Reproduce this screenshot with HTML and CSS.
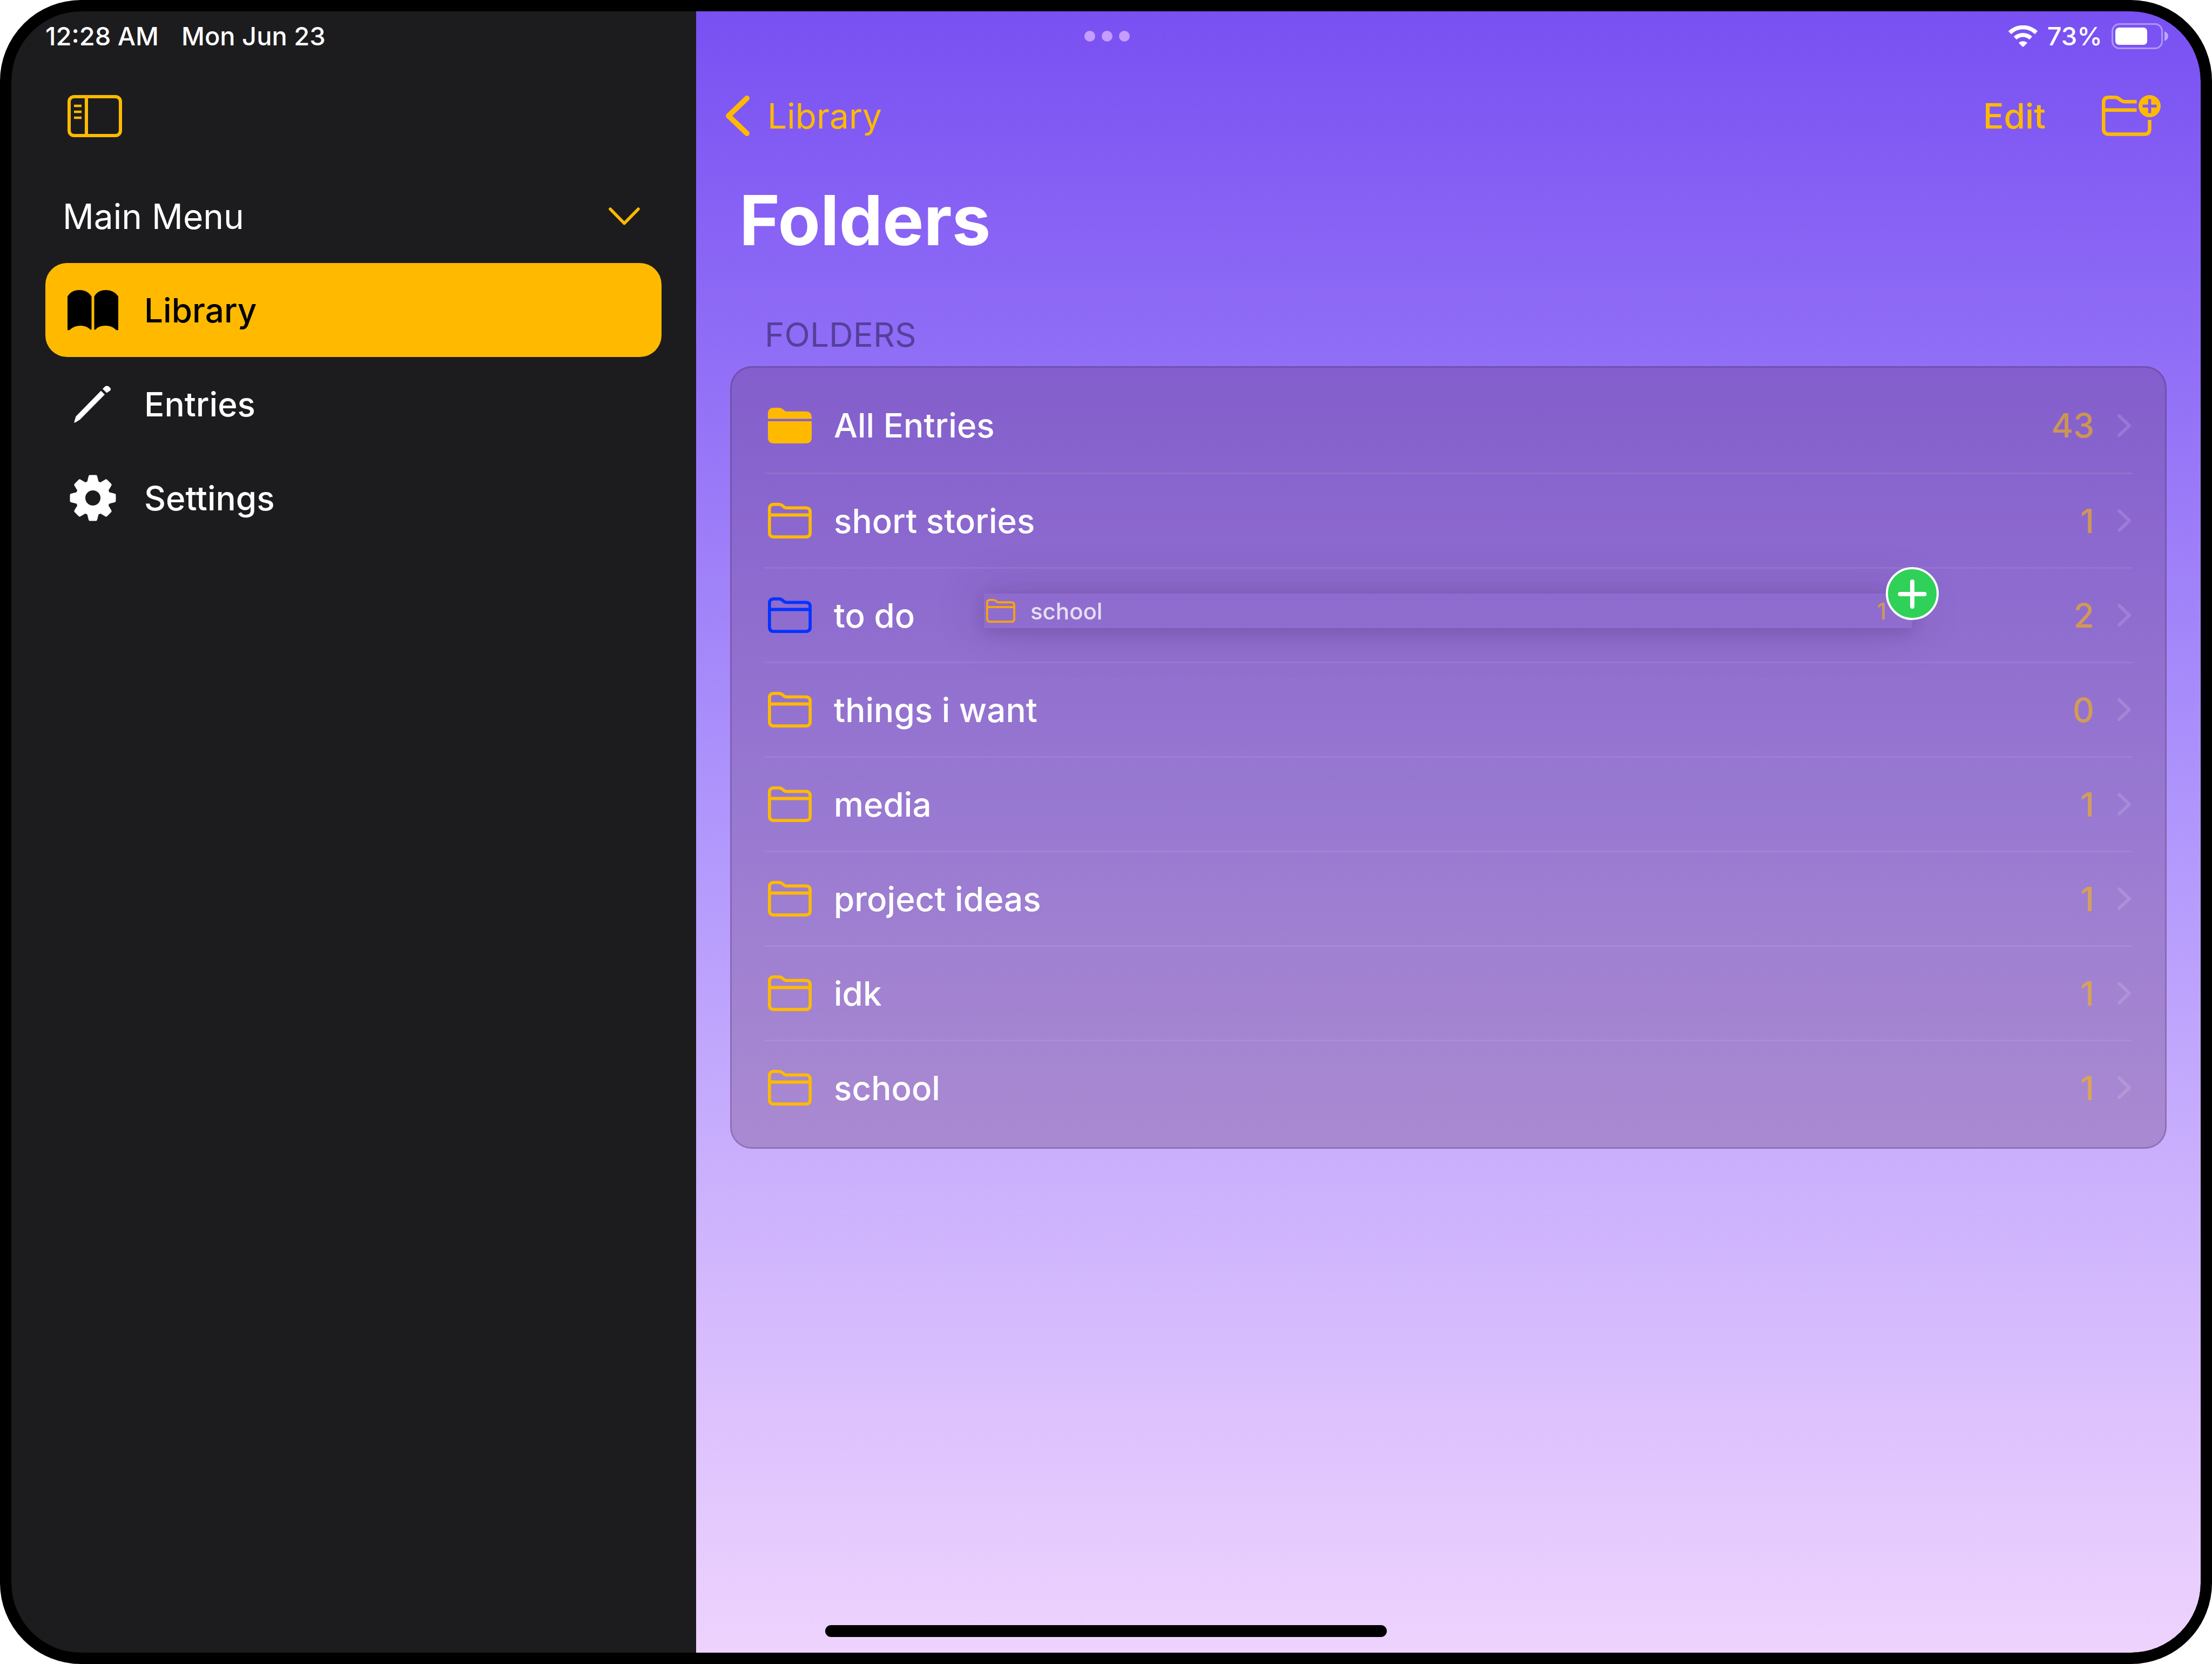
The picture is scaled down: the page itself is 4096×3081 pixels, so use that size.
FILE: index.html
```html
<!DOCTYPE html>
<html lang="en">
<head>
<meta charset="utf-8">
<title>Folders</title>
<link rel="stylesheet" href="styles.css">
</head>
<body>
<svg class="defs" aria-hidden="true">
  <symbol id="folder" viewBox="0 0 81 66">
    <path d="M2.8 11Q2.8 2.8 11 2.8H20Q24 2.8 27 5.400L30 8Q31.500 9.300 34 9.300H70Q78.200 9.300 78.200 17.500V55Q78.200 63.200 70 63.200H11Q2.800 63.200 2.800 55ZM2.800 22.500H78.200" fill="none" stroke="currentColor" stroke-width="5.800"/>
  </symbol>
  <symbol id="folder-fill" viewBox="0 0 81 66">
    <path d="M0 20.500V11Q0 0 11 0H21Q25 0 28 3L31 5.500Q32.500 6.800 35 6.800H70Q81 6.800 81 17.500V20.500ZM0 25H81V55Q81 66 70 66H11Q0 66 0 55Z" fill="currentColor"/>
  </symbol>
  <symbol id="disclosure" viewBox="0 0 25 42">
    <path d="M3 3L22 21L3 39" fill="none" stroke="currentColor" stroke-width="6" stroke-linecap="round" stroke-linejoin="round"/>
  </symbol>
</svg>

<div class="screen">
  <header class="status">
    <div class="status-left"><time>12:28 AM</time><span>Mon Jun 23</span></div>
    <div class="dots"><i></i><i></i><i></i></div>
    <div class="status-right">
      <svg class="wifi" viewBox="0 0 56 40" aria-label="Wi-Fi">
        <path d="M3.500 13.500A35 35 0 0 1 52.500 13.500" fill="none" stroke="currentColor" stroke-width="7.500"/>
        <path d="M13.500 23.500A21 21 0 0 1 42.500 23.500" fill="none" stroke="currentColor" stroke-width="7.500"/>
        <path d="M20 32.500A11.500 11.500 0 0 1 36 32.500L29.500 39Q28 40.500 26.500 39Z" fill="currentColor"/>
      </svg>
      <span>73%</span>
      <svg class="battery" viewBox="0 0 106 48" aria-label="Battery">
        <rect x="1.500" y="1.500" width="92" height="45" rx="13" fill="none" stroke="#fff" stroke-opacity=".4" stroke-width="3"/>
        <rect x="7" y="8" width="59" height="32" rx="7" fill="#fff"/>
        <path d="M98 15Q105 18 105 24T98 33Z" fill="#fff" fill-opacity=".5"/>
      </svg>
    </div>
  </header>

  <aside class="sidebar">
    <div class="side-bar">
      <button class="plain" type="button" aria-label="Toggle sidebar">
        <svg class="toggle" viewBox="0 0 101 78">
          <rect x="3" y="3" width="95" height="72" rx="9" fill="none" stroke="currentColor" stroke-width="6"/>
          <path d="M35 3V75" stroke="currentColor" stroke-width="6"/>
          <path d="M12 20H26M12 31H26M12 42H26" stroke="currentColor" stroke-width="4.500"/>
        </svg>
      </button>
    </div>
    <button class="menu-head" type="button">
      <span>Main Menu</span>
      <svg class="chev-down" viewBox="0 0 58 33" aria-hidden="true"><path d="M3 3L29 29.500L55 3" fill="none" stroke="currentColor" stroke-width="5.500" stroke-linecap="round" stroke-linejoin="round"/></svg>
    </button>
    <nav class="menu">
      <a class="item active" href="#library">
        <svg viewBox="0 0 94 86" aria-hidden="true"><path d="M0 18Q7 6 22 6T44.500 18V78.500Q44 80.500 42 79Q35 72 24 72T5 79Q1 82 0 79ZM49.500 18Q56 6 71 6T94 18V79Q93 82 89 79Q82 72 70 72T52 79Q50 80.500 49.500 78.500Z" fill="currentColor"/></svg>
        <span>Library</span>
      </a>
      <a class="item" href="#entries">
        <svg viewBox="0 0 94 86" aria-hidden="true"><path d="M12.500 76L15.500 66L62 18.500L69 25.500L23 72L14 77.500Q12 78 12.500 76ZM65 15L69.500 10.500Q74 8 78 12T78.500 18.500L72.500 22.500Z" fill="currentColor"/></svg>
        <span>Entries</span>
      </a>
      <a class="item" href="#settings">
        <svg viewBox="0 0 94 86" aria-hidden="true">
          <g transform="translate(47 43)">
            <circle r="23" fill="none" stroke="currentColor" stroke-width="18"/>
            <g fill="currentColor" stroke="currentColor" stroke-width="5" stroke-linejoin="round">
              <path id="tooth" d="M-8.500 -28L-5.500 -40H5.500L8.500 -28Z"/>
              <use href="#tooth" transform="rotate(45)"/><use href="#tooth" transform="rotate(90)"/><use href="#tooth" transform="rotate(135)"/><use href="#tooth" transform="rotate(180)"/><use href="#tooth" transform="rotate(225)"/><use href="#tooth" transform="rotate(270)"/><use href="#tooth" transform="rotate(315)"/>
            </g>
          </g>
        </svg>
        <span>Settings</span>
      </a>
    </nav>
  </aside>

  <main class="content">
    <div class="toolbar">
      <a class="back" href="#library">
        <svg viewBox="0 0 45 75" aria-hidden="true"><path d="M40 5L6 37.500L40 70" fill="none" stroke="currentColor" stroke-width="10" stroke-linecap="round" stroke-linejoin="round"/></svg>
        <span>Library</span>
      </a>
      <div class="actions">
        <button class="plain edit" type="button">Edit</button>
        <button class="plain" type="button" aria-label="New folder">
          <svg class="new-folder" viewBox="0 0 109 76">
            <path d="M64.500 12.300H43Q39 12.300 36 10L30.500 6Q28 4.300 24 4.300H13Q3.200 4.300 3.200 14V62.500Q3.200 72.500 13 72.500H79Q88.500 72.500 88.500 62.500V46M3.200 27.700H64.500" fill="none" stroke="currentColor" stroke-width="6.500"/>
            <path fill-rule="evenodd" d="M88.500 0A20.500 20.500 0 0 1 88.500 41A20.500 20.500 0 0 1 88.500 0ZM85.700 7.500V17.700H75.500V23.300H85.700V33.500H91.300V23.300H101.500V17.700H91.300V7.500Z" fill="currentColor"/>
          </svg>
        </button>
      </div>
    </div>
    <h1>Folders</h1>
    <section class="section">
      <h2>FOLDERS</h2>
      <div class="card">
        <ul class="rows">
          <li><a href="#all"><svg class="folder"><use href="#folder-fill"/></svg><span class="name">All Entries</span><span class="count">43</span><svg class="disclosure"><use href="#disclosure"/></svg></a></li>
          <li><a href="#short"><svg class="folder"><use href="#folder"/></svg><span class="name">short stories</span><span class="count">1</span><svg class="disclosure"><use href="#disclosure"/></svg></a></li>
          <li><a href="#todo"><svg class="folder blue"><use href="#folder"/></svg><span class="name">to do</span><span class="count">2</span><svg class="disclosure"><use href="#disclosure"/></svg></a></li>
          <li><a href="#want"><svg class="folder"><use href="#folder"/></svg><span class="name">things i want</span><span class="count">0</span><svg class="disclosure"><use href="#disclosure"/></svg></a></li>
          <li><a href="#media"><svg class="folder"><use href="#folder"/></svg><span class="name">media</span><span class="count">1</span><svg class="disclosure"><use href="#disclosure"/></svg></a></li>
          <li><a href="#ideas"><svg class="folder"><use href="#folder"/></svg><span class="name">project ideas</span><span class="count">1</span><svg class="disclosure"><use href="#disclosure"/></svg></a></li>
          <li><a href="#idk"><svg class="folder"><use href="#folder"/></svg><span class="name">idk</span><span class="count">1</span><svg class="disclosure"><use href="#disclosure"/></svg></a></li>
          <li><a href="#school"><svg class="folder"><use href="#folder"/></svg><span class="name">school</span><span class="count">1</span><svg class="disclosure"><use href="#disclosure"/></svg></a></li>
        </ul>
        <div class="drag">
          <svg class="drag-folder"><use href="#folder"/></svg>
          <span class="drag-name">school</span>
          <span class="count">1</span>
          <svg class="badge" viewBox="0 0 98 98" aria-label="Add">
            <circle cx="49" cy="49" r="47" fill="#30d158" stroke="#fff" stroke-width="4"/>
            <path d="M49 27V73M26.500 50H71.500" stroke="#fff" stroke-width="8" stroke-linecap="round"/>
          </svg>
        </div>
      </div>
    </section>
  </main>
  <div class="home"></div>
</div>
</body>
</html>
```
FILE: styles.css
```css
:root {
  --accent: #ffba00;
}

* {
  box-sizing: border-box;
}

body {
  margin: 0;
  background: #fff;
  font-family: Inter, "Liberation Sans", sans-serif;
  color: #fff;
}

.defs {
  position: absolute;
  width: 0;
  height: 0;
}

svg {
  display: block;
  flex: none;
}

a {
  color: inherit;
  text-decoration: none;
}

button {
  margin: 0;
  border: 0;
  background: none;
  font: inherit;
  color: inherit;
}

.plain {
  padding: 0;
  color: var(--accent);
}

.screen {
  position: relative;
  display: grid;
  grid-template-columns: 1268px 1fr;
  min-height: 100vh;
  border: 21px solid #000;
  border-radius: 150px;
  background: #000;
  overflow: hidden;
}

/* Status bar */
.status {
  position: absolute;
  top: 0;
  left: 0;
  right: 0;
  display: grid;
  grid-template-columns: 1fr auto 1fr;
  align-items: center;
  height: 91px;
  padding: 0 59px 0 63px;
  font-size: 47px;
  font-weight: 500;
  line-height: 56px;
}

.status-left {
  display: flex;
  gap: 42px;
}

.dots {
  display: flex;
  gap: 12px;
}

.dots i {
  width: 20px;
  height: 20px;
  border-radius: 50%;
  background: #c49dff;
}

.status-right {
  display: flex;
  align-items: center;
  justify-content: flex-end;
  gap: 17px;
}

.wifi {
  width: 56px;
  height: 40px;
}

.battery {
  width: 106px;
  height: 48px;
}

/* Sidebar */
.sidebar {
  padding: 91px 64px 0 63px;
  background: #1c1c1e;
  border-radius: 129px 0 0 129px;
}

.side-bar {
  display: flex;
  align-items: center;
  height: 206px;
  padding-left: 41px;
}

.toggle {
  width: 101px;
  height: 78px;
}

.menu-head {
  display: flex;
  align-items: center;
  justify-content: space-between;
  width: 100%;
  height: 164px;
  margin-bottom: 5px;
  padding: 0 40px 0 32px;
  font-size: 64px;
}

.chev-down {
  width: 58px;
  height: 33px;
  color: var(--accent);
}

.item {
  display: flex;
  align-items: center;
  gap: 48px;
  height: 174px;
  padding-left: 41px;
  border-radius: 40px;
  font-size: 62px;
  font-weight: 500;
}

.item svg {
  width: 94px;
  height: 86px;
}

.item.active {
  background: var(--accent);
  color: #000;
}

/* Content */
.content {
  padding: 91px 63px 0;
  background: linear-gradient(#7950f2, #b197fc 50%, #eed3fe);
  border-radius: 0 129px 129px 0;
}

.toolbar {
  display: flex;
  align-items: center;
  justify-content: space-between;
  height: 204px;
  margin: 0 11px 0 -9px;
  color: var(--accent);
}

.back {
  display: flex;
  align-items: center;
  gap: 33px;
  font-size: 64px;
}

.back svg {
  width: 45px;
  height: 75px;
}

.actions {
  display: flex;
  align-items: center;
  gap: 104px;
}

.edit {
  font-size: 64px;
  font-weight: 500;
}

.new-folder {
  width: 109px;
  height: 76px;
}

h1 {
  margin: 2px 0 0;
  padding-left: 17px;
  font-size: 128px;
  font-weight: 700;
  line-height: 180px;
}

h2 {
  margin: 84px 0 20px;
  padding-left: 64px;
  font-size: 62px;
  font-weight: 400;
  line-height: 76px;
  color: #54409a;
}

.card {
  position: relative;
  padding: 19px 61px 24px;
  border: 3px solid rgba(40, 20, 60, .2);
  border-radius: 40px;
  background: rgba(100, 55, 108, .3);
}

.rows {
  margin: 0;
  padding: 0;
  list-style: none;
}

.rows li + li {
  border-top: 3px solid rgba(255, 255, 255, .08);
}

.rows a {
  display: flex;
  align-items: center;
  height: 172px;
  padding: 0 2px 0 6px;
  font-size: 62px;
  font-weight: 500;
}

.rows li:first-child a {
  height: 175px;
}

.folder {
  width: 81px;
  height: 66px;
  margin-right: 41px;
  color: var(--accent);
}

.blue {
  color: #0433ff;
}

.name {
  flex: 1;
}

.count {
  color: rgba(255, 186, 0, .58);
}

.disclosure {
  width: 25px;
  height: 42px;
  margin-left: 43px;
  color: rgba(255, 255, 255, .14);
}

/* Row being dragged over the list */
.drag {
  position: absolute;
  top: 418px;
  left: 467px;
  right: 468px;
  display: flex;
  align-items: center;
  height: 64px;
  padding: 0 48px 0 4px;
  font-size: 42px;
  font-weight: 500;
  box-shadow: 0 6px 28px rgba(50, 30, 70, .18), 0 0 90px rgba(70, 40, 90, .22);
}

.drag-folder {
  width: 54px;
  height: 44px;
  margin-right: 28px;
  color: #f5a410;
}

.drag-name {
  flex: 1;
  color: rgba(255, 255, 255, .78);
}

.badge {
  position: absolute;
  top: -49px;
  right: -49px;
  width: 98px;
  height: 98px;
}

.home {
  position: absolute;
  left: 50%;
  bottom: 29px;
  width: 1040px;
  height: 22px;
  margin-left: -520px;
  border-radius: 11px;
  background: #000;
}
```
